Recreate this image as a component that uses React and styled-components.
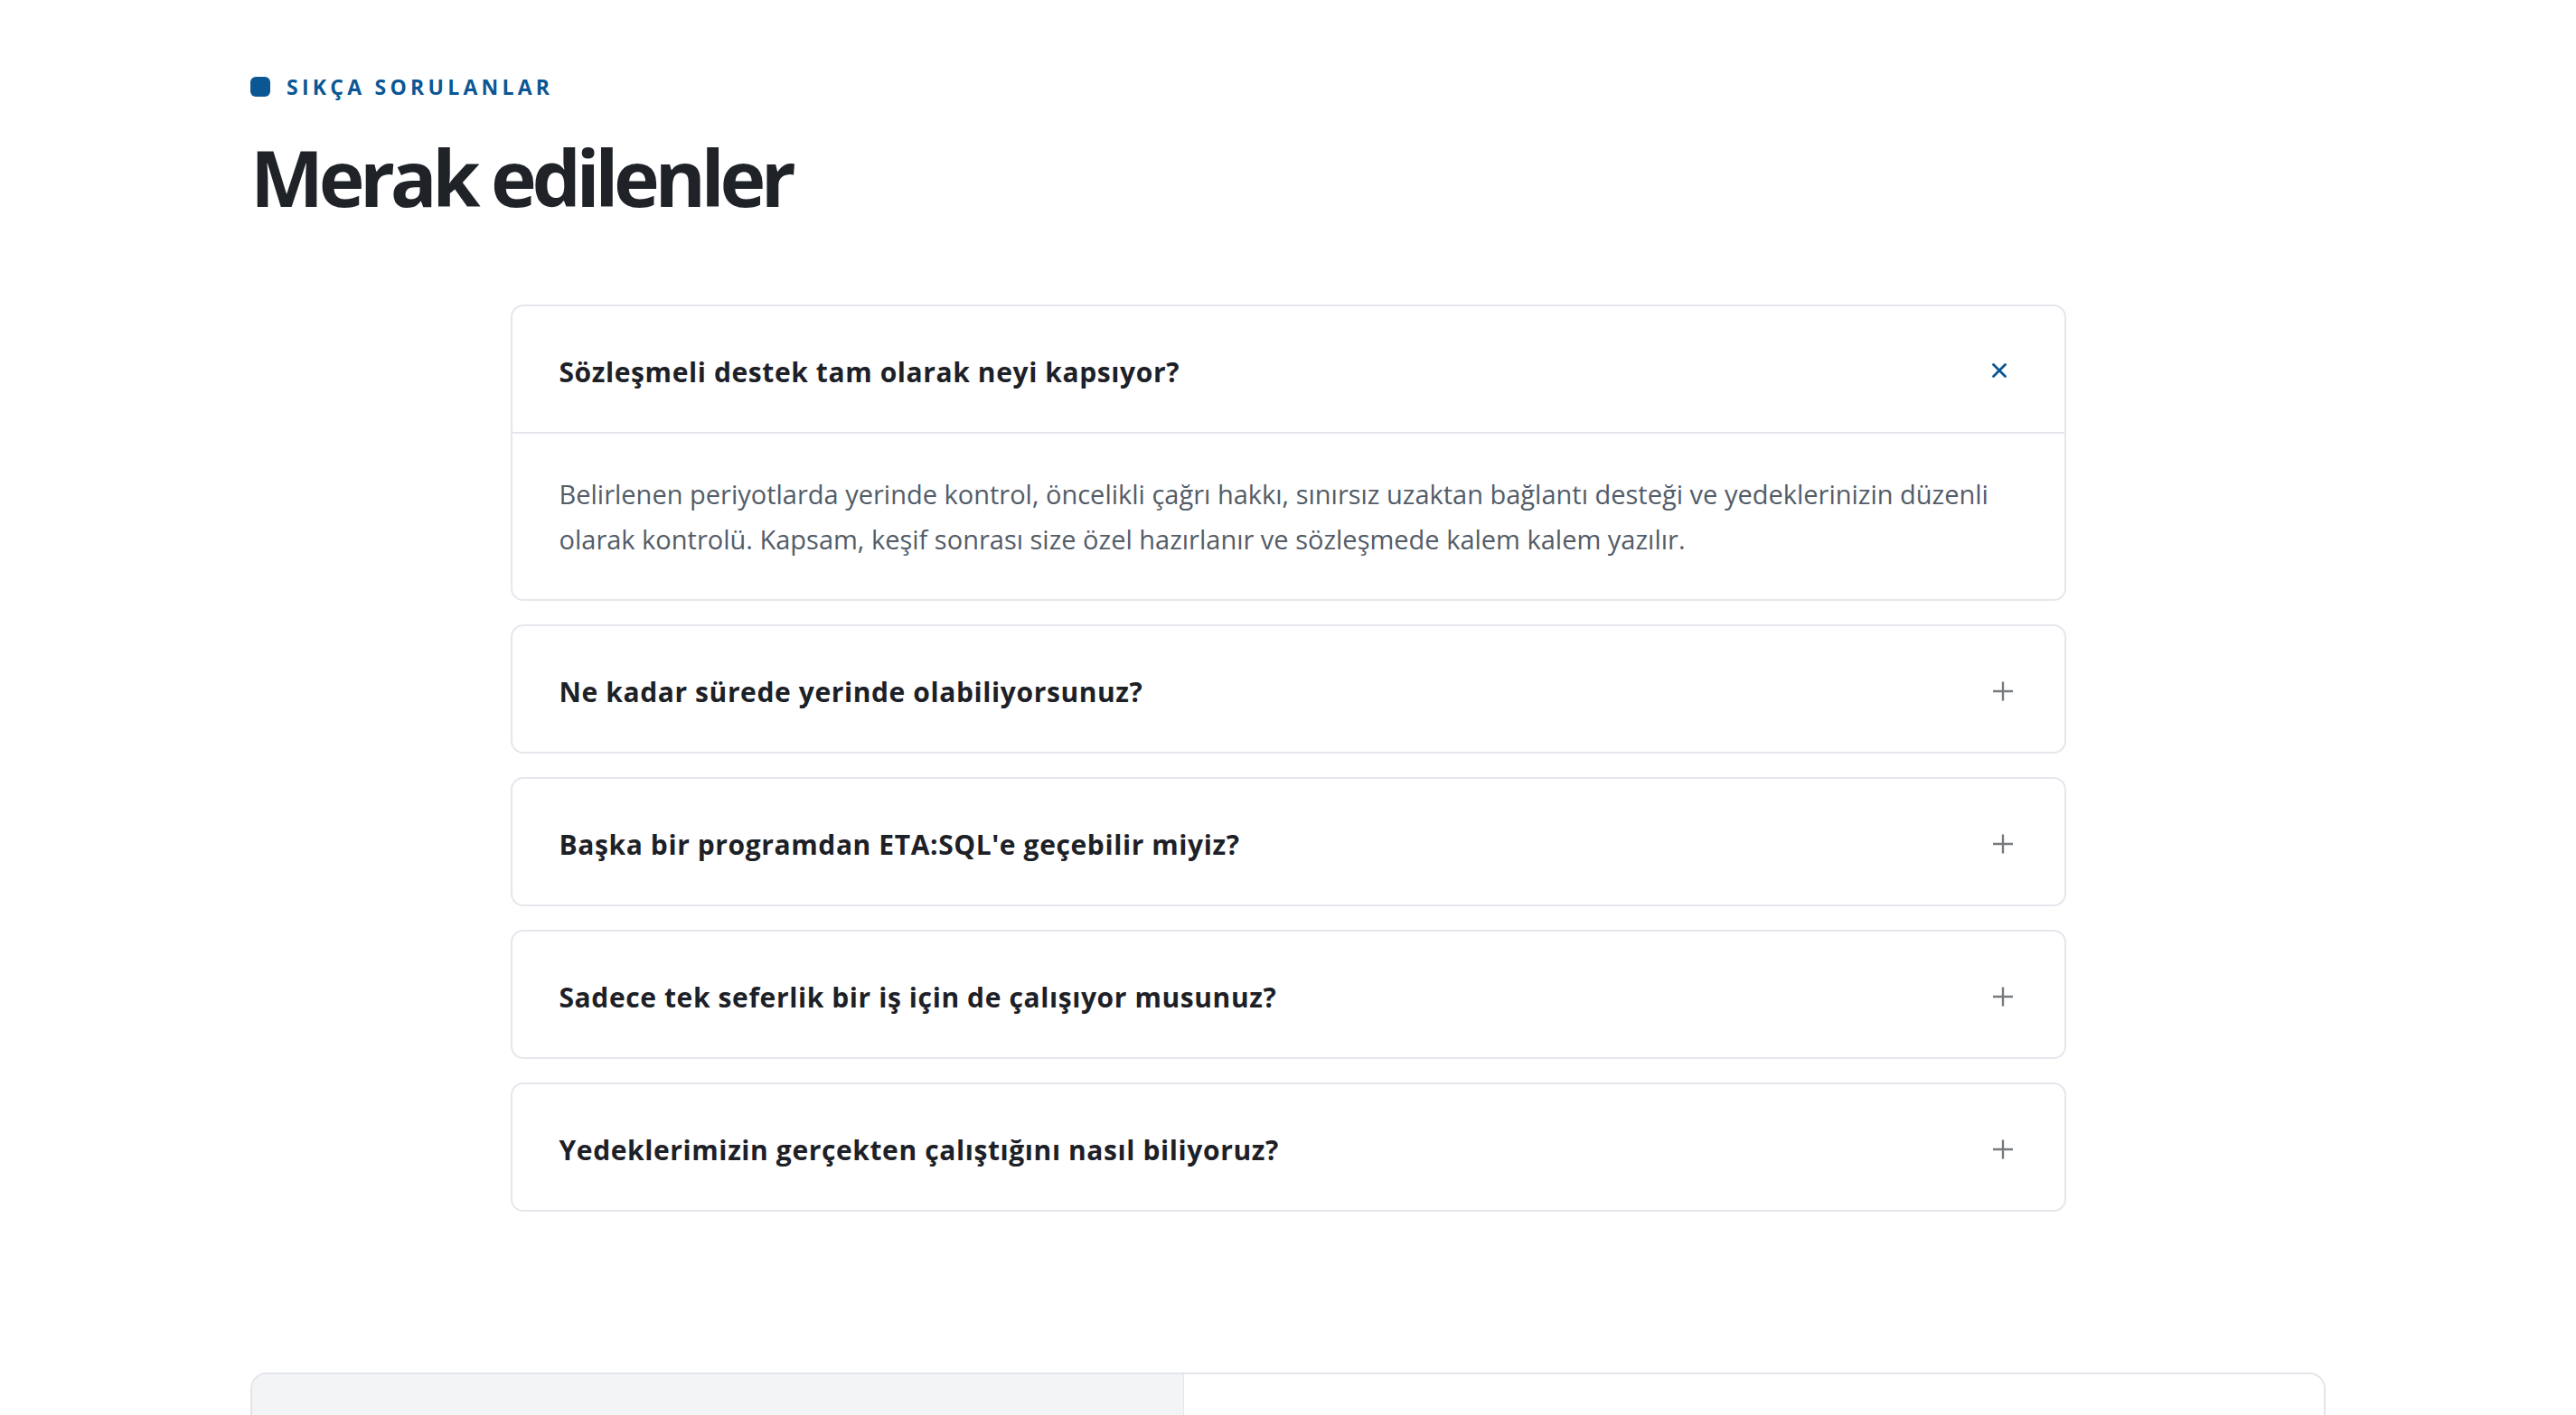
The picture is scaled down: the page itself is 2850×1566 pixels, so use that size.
import React, { useState } from 'react';
import styled, { createGlobalStyle } from 'styled-components';

const GlobalStyle = createGlobalStyle`
  * { box-sizing: border-box; }
  body {
    margin: 0;
    background: #ffffff;
    font-family: "Open Sans", "Noto Sans", sans-serif;
  }
`;

const faqs = [
  {
    q: 'Sözleşmeli destek tam olarak neyi kapsıyor?',
    a: 'Belirlenen periyotlarda yerinde kontrol, öncelikli çağrı hakkı, sınırsız uzaktan bağlantı desteği ve yedeklerinizin düzenli olarak kontrolü. Kapsam, keşif sonrası size özel hazırlanır ve sözleşmede kalem kalem yazılır.',
  },
  {
    q: 'Ne kadar sürede yerinde olabiliyorsunuz?',
    a: 'Sözleşmeli müşterilerimiz için aynı gün içinde yerinde destek sağlıyoruz.',
  },
  {
    q: "Başka bir programdan ETA:SQL'e geçebilir miyiz?",
    a: 'Evet, veri aktarımı ve kurulum sürecini baştan sona biz yürütüyoruz.',
  },
  {
    q: 'Sadece tek seferlik bir iş için de çalışıyor musunuz?',
    a: 'Evet, sözleşme olmadan da tek seferlik işler için destek veriyoruz.',
  },
  {
    q: 'Yedeklerimizin gerçekten çalıştığını nasıl biliyoruz?',
    a: 'Yedekler düzenli aralıklarla geri yükleme testinden geçirilir ve raporlanır.',
  },
];

const Page = styled.main`
  padding-top: 84px;
`;

const Container = styled.div`
  max-width: 2296px;
  margin: 0 auto;
`;

const Eyebrow = styled.div`
  display: flex;
  align-items: center;
  gap: 18px;
  height: 23px;
  font-size: 23px;
  font-weight: 700;
  letter-spacing: 0.185em;
  color: #0b5794;
`;

const Dot = styled.span`
  width: 22px;
  height: 22px;
  border-radius: 6px;
  background: #0b5794;
`;

const Heading = styled.h2`
  margin: 42px 0 0;
  font-size: 86px;
  line-height: 1.1;
  font-weight: 700;
  letter-spacing: -0.063em;
  color: #1f2328;
`;

const FaqList = styled.div`
  max-width: 1721px;
  margin: 93px auto 0;
  display: flex;
  flex-direction: column;
  gap: 26px;
`;

const Card = styled.div`
  border: 2px solid #e4e7ec;
  border-radius: 14px;
  background: #ffffff;
  overflow: hidden;
`;

const Question = styled.button`
  width: 100%;
  height: 139px;
  padding: 6px 56px 0 52px;
  display: flex;
  align-items: center;
  justify-content: space-between;
  border: 0;
  background: transparent;
  cursor: pointer;
  text-align: left;
  font-family: inherit;
  font-size: 30px;
  font-weight: 700;
  letter-spacing: 0.02em;
  color: #1d2127;
`;

const IconBox = styled.span`
  flex: none;
  width: 24px;
  height: 24px;
  display: flex;
`;

const Answer = styled.div`
  border-top: 2px solid #e4e7ec;
  padding: 42px 56px 41px 52px;
  font-size: 29px;
  line-height: 50px;
  color: #535c67;
`;

const Bottom = styled.section`
  margin-top: 178px;
  height: 420px;
  display: grid;
  grid-template-columns: 1031px 1fr;
  border: 2px solid #e2e6ea;
  border-radius: 18px;
  overflow: hidden;
`;

const BottomSide = styled.div`
  background: ${(p) => (p.$muted ? '#f3f4f6' : '#ffffff')};
  border-right: ${(p) => (p.$muted ? '1px solid #e5e7eb' : '0')};
`;

const PlusIcon = () => (
  <svg width="24" height="24" viewBox="0 0 24 24" fill="none" stroke="#777b80" strokeWidth="2.4">
    <path d="M12 1.5V22.5M1 12H23" />
  </svg>
);

const CloseIcon = () => (
  <svg width="24" height="24" viewBox="0 0 24 24" fill="none" stroke="#0b5794" strokeWidth="2.8" strokeLinecap="round">
    <path d="M1.5 4.5L14.5 17.5M14.5 4.5L1.5 17.5" />
  </svg>
);

const App = () => {
  const [open, setOpen] = useState(0);

  return (
    <>
      <GlobalStyle />
      <Page>
        <Container>
          <Eyebrow>
            <Dot />
            SIKÇA SORULANLAR
          </Eyebrow>
          <Heading>Merak edilenler</Heading>

          <FaqList>
            {faqs.map((item, i) => (
              <Card key={item.q}>
                <Question onClick={() => setOpen(open === i ? -1 : i)}>
                  {item.q}
                  <IconBox>{open === i ? <CloseIcon /> : <PlusIcon />}</IconBox>
                </Question>
                {open === i && <Answer>{item.a}</Answer>}
              </Card>
            ))}
          </FaqList>

          <Bottom>
            <BottomSide $muted />
            <BottomSide />
          </Bottom>
        </Container>
      </Page>
    </>
  );
};

export default App;
